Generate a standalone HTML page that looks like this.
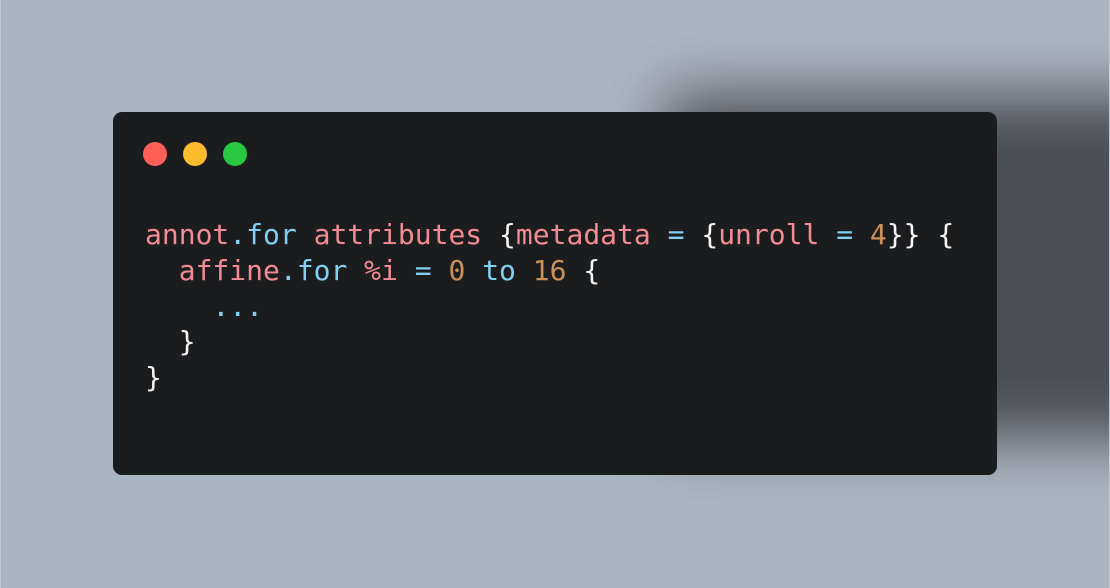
<!DOCTYPE html>
<html><head><meta charset="utf-8"><style>
html,body{margin:0;padding:0}
body{width:1110px;height:588px;background:#aab5c2;position:relative;overflow:hidden;font-family:"DejaVu Sans Mono","Liberation Mono",monospace}
.sh{position:absolute;left:665px;top:95px;width:540px;height:345px;background:#454a52;filter:blur(30px);opacity:.95}
.card{position:absolute;left:113px;top:112px;width:884px;height:363px;background:#1b1c1e;border-radius:9px}
.dot{position:absolute;top:142px;width:24px;height:24px;border-radius:50%}
pre{position:absolute;left:145px;top:217px;margin:0;font-size:28px;line-height:35.8px;color:#f4f4f4;font-family:"DejaVu Sans Mono",monospace}
.p{color:#f28b93}.b{color:#7fd0f2}.o{color:#cc9158}
.edge{position:absolute;top:0;right:0;width:1px;height:588px;background:#c2cbd5}
.edgel{position:absolute;top:0;left:0;width:1px;height:588px;background:#c2cbd5}
</style></head><body>
<div class="sh"></div>
<div class="edge"></div><div class="edgel"></div>
<div class="card"></div>
<div class="dot" style="left:143px;background:#fe5f57"></div>
<div class="dot" style="left:183px;background:#febc2e"></div>
<div class="dot" style="left:223px;background:#28c840"></div>
<pre><span class="p">annot</span><span class="b">.for</span> <span class="p">attributes</span> {<span class="p">metadata</span> <span class="b">=</span> {<span class="p">unroll</span> <span class="b">=</span> <span class="o">4</span>}} {
  <span class="p">affine</span><span class="b">.for</span> <span class="p">%i</span> <span class="b">=</span> <span class="o">0</span> <span class="b">to</span> <span class="o">16</span> {
    <span class="b">...</span>
  }
}</pre>
</body></html>
